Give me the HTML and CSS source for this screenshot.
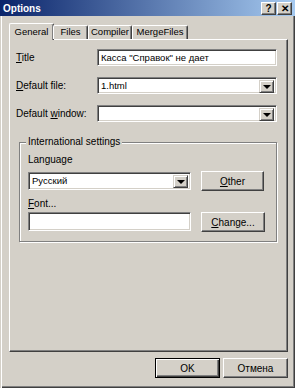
FILE: index.html
```html
<!DOCTYPE html>
<html lang="en">
<head>
  <meta charset="UTF-8" />
  <title>Options</title>
  <link rel="stylesheet" href="styles.css">
</head>
<body>
  <div class="window">
    <div class="titlebar">
      <span class="caption">Options</span>
      <div class="caption-buttons">
        <button class="cap-btn">?</button>
        <button class="cap-btn">&#x2715;</button>
      </div>
    </div>

    <div class="client">
      <div class="tabs">
        <div class="tab active">General</div>
        <div class="tab tab-files">Files</div>
        <div class="tab tab-compiler">Compiler</div>
        <div class="tab tab-merge">MergeFiles</div>
      </div>

      <div class="panel">
        <div class="fields">
          <label><u>T</u>itle</label>
          <div class="edit">Касса "Справок" не дает</div>

          <label><u>D</u>efault file:</label>
          <div class="combo">
            <span class="combo-text">1.html</span>
            <span class="drop"><span class="arrow"></span></span>
          </div>

          <label>Default <u>w</u>indow:</label>
          <div class="combo">
            <span class="combo-text"></span>
            <span class="drop"><span class="arrow"></span></span>
          </div>
        </div>

        <fieldset class="group">
          <legend>International settings</legend>
          <div class="group-label">Language</div>
          <div class="group-row">
            <div class="combo combo-lang">
              <span class="combo-text">Русский</span>
              <span class="drop"><span class="arrow"></span></span>
            </div>
            <button class="btn"><u>O</u>ther</button>
          </div>
          <div class="group-label label-font"><u>F</u>ont...</div>
          <div class="group-row row-font">
            <div class="edit edit-font"></div>
            <button class="btn btn-change"><u>C</u>hange...</button>
          </div>
        </fieldset>
      </div>

      <div class="footer">
        <button class="btn btn-default">OK</button>
        <button class="btn btn-footer">Отмена</button>
      </div>
    </div>
  </div>
</body>
</html>
```

FILE: styles.css
```css
* {
  box-sizing: border-box;
}

body {
  margin: 0;
  font-family: 'Liberation Sans', Arial, sans-serif;
  font-size: 10px;
  color: #000;
  background: #d4d0c8;
}

.window {
  width: 295px;
  height: 388px;
  display: flex;
  flex-direction: column;
  padding: 0 2px 2px 2px;
  background: #d4d0c8;
  box-shadow: inset 1px 0 #d4d0c8, inset 2px 0 #fff, inset -1px -1px #404040, inset -2px -2px #808080;
}

/* caption */
.titlebar {
  height: 16px;
  margin: 0 -2px;
  display: flex;
  align-items: center;
  justify-content: space-between;
  background: linear-gradient(to right, #0a246a, #a6caf0);
}

.caption {
  color: #fff;
  font-weight: bold;
  font-size: 10px;
  padding-left: 3px;
}

.caption-buttons {
  display: flex;
  gap: 1px;
  padding-right: 3px;
  padding-top: 1px;
}

.cap-btn {
  width: 15px;
  height: 13px;
  padding: 0;
  font-family: 'Liberation Sans', Arial, sans-serif;
  font-size: 10px;
  font-weight: bold;
  line-height: 10px;
  background: #d4d0c8;
  border: 1px solid;
  border-color: #fff #404040 #404040 #fff;
  box-shadow: inset -1px -1px #808080;
}

/* dialog body */
.client {
  flex: 1;
  display: flex;
  flex-direction: column;
  padding: 7px 5px 0 7px;
}

.tabs {
  display: flex;
  height: 16px;
  align-items: flex-end;
  position: relative;
  z-index: 1;
}

.tab {
  flex-shrink: 0;
  height: 14px;
  line-height: 12px;
  font-size: 9.5px;
  text-align: center;
  white-space: nowrap;
  border: 1px solid;
  border-bottom: none;
  border-color: #fff #404040 #404040 #fff;
  border-radius: 2px 2px 0 0;
  box-shadow: inset -1px 0 #808080;
  background: #d4d0c8;
}

.tab.active {
  width: 45px;
  height: 17px;
  margin-bottom: -1px;
  padding-top: 2px;
}

.tab-files {
  width: 35px;
  margin-left: -1px;
}

.tab-compiler {
  width: 44px;
}

.tab-merge {
  width: 56px;
}

.panel {
  height: 313px;
  border: 1px solid;
  border-color: #fff #404040 #404040 #fff;
  box-shadow: inset -1px -1px #808080;
  padding-top: 9px;
}

.fields {
  display: grid;
  grid-template-columns: 81px 180px;
  grid-auto-rows: 17px;
  row-gap: 11px;
  margin-left: 6px;
  align-items: center;
}

.edit,
.combo {
  height: 17px;
  background: #fff;
  border: 1px solid;
  border-color: #808080 #fff #fff #808080;
  box-shadow: inset 1px 1px #404040, inset -1px -1px #d4d0c8;
  padding: 1px 3px 0 3px;
  line-height: 13px;
  font-size: 9.5px;
  white-space: nowrap;
  overflow: hidden;
}

.combo {
  display: flex;
  justify-content: space-between;
  padding: 2px 2px 2px 3px;
}

.combo-text {
  line-height: 12px;
}

.drop {
  width: 15px;
  height: 13px;
  border: 1px solid;
  border-color: #d4d0c8 #404040 #404040 #d4d0c8;
  box-shadow: inset 1px 1px #fff, inset -1px -1px #808080;
  background: #d4d0c8;
  display: flex;
  align-items: center;
  justify-content: center;
}

.arrow {
  width: 0;
  height: 0;
  border-left: 4px solid transparent;
  border-right: 4px solid transparent;
  border-top: 4px solid #000;
}

/* international settings */
.group {
  margin: 14px 0 0 9px;
  width: 258px;
  padding: 0 0 9px 8px;
  border: 1px solid #808080;
  box-shadow: inset 1px 1px #fff, 1px 1px #fff;
}

.group legend {
  margin-left: -2px;
  padding: 0 2px;
  line-height: 12px;
  background: #d4d0c8;
}

.group-label {
  line-height: 12px;
  margin-top: 6px;
}

.label-font {
  margin-top: 7px;
}

.group-row {
  display: flex;
  align-items: flex-start;
  gap: 10px;
  margin-top: 5px;
}

.row-font {
  margin-top: 2px;
}

.combo-lang {
  width: 163px;
  height: 18px;
  margin-top: 1px;
}

.edit-font {
  width: 163px;
  height: 19px;
}

.btn {
  width: 63px;
  height: 20px;
  padding: 0;
  font-family: 'Liberation Sans', Arial, sans-serif;
  font-size: 10px;
  color: #000;
  background: #d4d0c8;
  border: 1px solid;
  border-color: #fff #404040 #404040 #fff;
  box-shadow: inset -1px -1px #808080;
}

.btn-change {
  width: 64px;
}

.footer {
  display: flex;
  justify-content: flex-end;
  gap: 3px;
  margin-top: 6px;
}

.btn-default,
.btn-footer {
  width: 65px;
}

.btn-default {
  border: 1px solid #000;
  box-shadow: inset 1px 1px #fff, inset -1px -1px #404040, inset -2px -2px #808080;
}
```
